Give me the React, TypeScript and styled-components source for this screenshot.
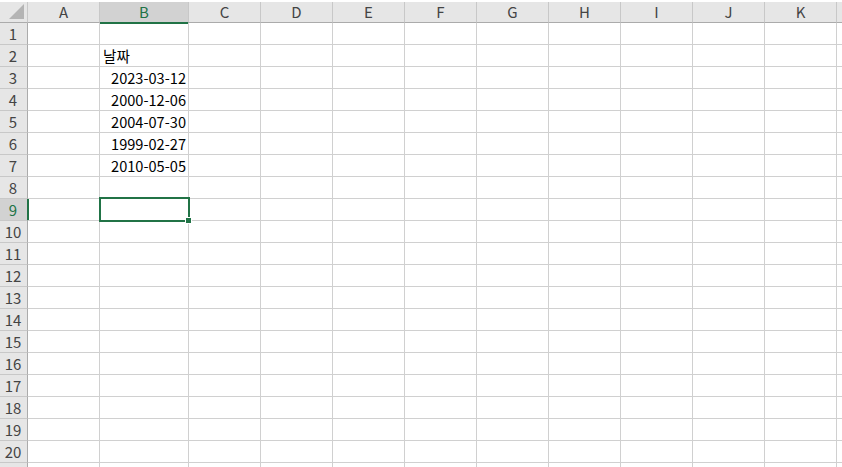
import React from "react";
import styled, { createGlobalStyle } from "styled-components";

const GlobalStyle = createGlobalStyle`
  html, body {
    margin: 0;
    padding: 0;
    background: #ffffff;
    overflow: hidden;
  }
  body {
    font-family: "Noto Sans CJK KR", "Noto Sans", sans-serif;
  }
`;

const COLS = ["A", "B", "C", "D", "E", "F", "G", "H", "I", "J", "K"];
const ROWS = 20;
const GREEN = "#217346";

const cellData: Record<string, { text: string; align: "left" | "right" }> = {
  B2: { text: "날짜", align: "left" },
  B3: { text: "2023-03-12", align: "right" },
  B4: { text: "2000-12-06", align: "right" },
  B5: { text: "2004-07-30", align: "right" },
  B6: { text: "1999-02-27", align: "right" },
  B7: { text: "2010-05-05", align: "right" },
};

const Sheet = styled.div`
  width: 842px;
  height: 467px;
  overflow: hidden;
  padding-top: 2px;
  box-sizing: border-box;
`;

const Grid = styled.div`
  display: grid;
  grid-template-columns: 28px 72px 89px repeat(9, 72px) 1fr;
  grid-auto-rows: 22px;
  grid-template-rows: 21px;
`;

const Corner = styled.div`
  position: relative;
  background: #e6e6e6;
  border-right: 1px solid #c8c8c8;
  border-bottom: 1px solid #ababab;
`;

const CornerTriangle = styled.div`
  position: absolute;
  right: 3px;
  bottom: 3px;
  width: 0;
  height: 0;
  border-left: 15px solid transparent;
  border-bottom: 15px solid #b4b4b4;
`;

const ColHeader = styled.div<{ $active?: boolean }>`
  background: ${(p) => (p.$active ? "#d2d2d2" : "#e6e6e6")};
  color: ${(p) => (p.$active ? GREEN : "#444444")};
  border-right: 1px solid #c8c8c8;
  border-bottom: ${(p) => (p.$active ? `2px solid ${GREEN}` : "1px solid #ababab")};
  margin-bottom: ${(p) => (p.$active ? "-1px" : "0")};
  font-size: 15px;
  line-height: 20px;
  text-align: center;
  box-sizing: border-box;
`;

const RowHeader = styled.div<{ $active?: boolean }>`
  background: ${(p) => (p.$active ? "#d2d2d2" : "#e6e6e6")};
  color: ${(p) => (p.$active ? GREEN : "#444444")};
  border-bottom: 1px solid #c8c8c8;
  border-right: ${(p) => (p.$active ? `2px solid ${GREEN}` : "1px solid #ababab")};
  margin-right: ${(p) => (p.$active ? "-1px" : "0")};
  font-size: 15px;
  line-height: 21px;
  text-align: center;
  padding-right: 1px;
`;

const Cell = styled.div<{ $align: "left" | "right" }>`
  position: relative;
  border-right: 1px solid #d0d0d0;
  border-bottom: 1px solid #d0d0d0;
  font-size: 14.6px;
  line-height: 21px;
  color: #000000;
  text-align: ${(p) => p.$align};
  padding: 0 2px 0 3px;
  white-space: nowrap;
`;

const Selection = styled.div`
  position: absolute;
  top: -2px;
  left: -1px;
  right: -2px;
  bottom: -2px;
  border: 2px solid ${GREEN};
  pointer-events: none;
  z-index: 2;
`;

const FillHandle = styled.div`
  position: absolute;
  right: -4px;
  bottom: -4px;
  width: 5px;
  height: 5px;
  background: ${GREEN};
  border: 1px solid #ffffff;
`;

export default function App() {
  const rows = [];
  for (let r = 1; r <= ROWS + 1; r++) {
    rows.push(
      <React.Fragment key={r}>
        <RowHeader $active={r === 9}>{r <= ROWS ? r : ""}</RowHeader>
        {COLS.map((c) => {
          const data = cellData[`${c}${r}`];
          return (
            <Cell key={c} $align={data ? data.align : "left"}>
              {data ? data.text : ""}
              {c === "B" && r === 9 && (
                <Selection>
                  <FillHandle />
                </Selection>
              )}
            </Cell>
          );
        })}
        <Cell $align="left" />
      </React.Fragment>
    );
  }

  return (
    <>
      <GlobalStyle />
      <Sheet>
        <Grid>
          <Corner>
            <CornerTriangle />
          </Corner>
          {COLS.map((c) => (
            <ColHeader key={c} $active={c === "B"}>
              {c}
            </ColHeader>
          ))}
          <ColHeader />
          {rows}
        </Grid>
      </Sheet>
    </>
  );
}
